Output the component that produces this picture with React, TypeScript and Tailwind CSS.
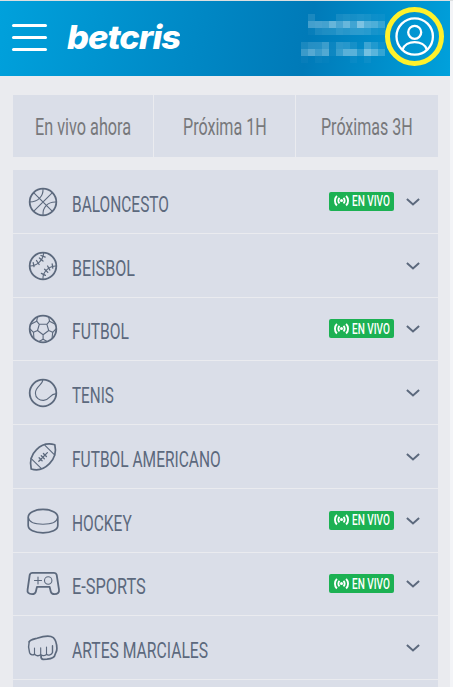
import { ReactNode, useLayoutEffect, useRef, useState } from 'react';

interface Sport {
  id: string;
  name: string;
  width: number;
  live: boolean;
  icon: ReactNode;
}

interface CondensedProps {
  text: string;
  width: number;
  className?: string;
}

// Squeezes a line of text horizontally so that it fills the given width
function Condensed({ text, width, className = '' }: CondensedProps) {
  const ref = useRef<HTMLSpanElement>(null);
  const [scale, setScale] = useState(0.66);

  useLayoutEffect(() => {
    if (ref.current) setScale(width / ref.current.offsetWidth);
  }, [text, width]);

  return (
    <span className={`block whitespace-nowrap ${className}`} style={{ width }}>
      <span
        ref={ref}
        className="inline-block origin-left"
        style={{ transform: `scaleX(${scale})` }}
      >
        {text}
      </span>
    </span>
  );
}

const basketball = (
  <>
    <circle cx="18" cy="18" r="13.3" strokeWidth="1.8" />
    <path d="M8.6 8.6 27.4 27.4M27.4 8.6 8.6 27.4M18 4.7C18.5 12 13 18 4.7 18M31.3 18C23 17.5 17.5 23 18 31.3" />
  </>
);

const baseball = (
  <>
    <circle cx="18" cy="18" r="13.3" strokeWidth="1.8" />
    <path d="M18.5 5C18.5 12 12 18 5 18M31 18C24 18 17.5 24 18 31" />
    <path d="M16 7.5l4.2 1.6M14.4 10l3.600 3M11.500 12.500l2.600 4M8.200 14.600l.8 4M27.200 16l.6 4.200M22.600 18l2.200 4M19.600 21.200l3.200 3.200M16.400 25.400l4 2" strokeWidth="1.300" />
  </>
);

const soccer = (
  <>
    <circle cx="18" cy="18" r="13.3" strokeWidth="1.8" />
    <path d="M14.3 13.3h7.6l1.8 6.2-5.6 4.3-5.6-4.3zM14.3 13.3l-2.6-3.1M21.9 13.3l2.6-3.1M23.7 19.5l4 1.8M12.5 19.5l-4 1.8M18.1 23.8v4.5" />
    <path d="M12.500 6l-.8 4.200-5.400 2.700M23.700 6l.8 4.200 5.400 2.700M5 18l3.500 3.300.4 5.800M31 18l-3.300 3.300-.6 5.800M14 30.500l4.100-2.200 4.100 2.200" />
  </>
);

const tennis = (
  <>
    <circle cx="18" cy="18" r="13.3" strokeWidth="1.8" />
    <path d="M17.8 4.8C18 10 10.4 11 10.4 18.2C10.4 23 14.5 25.6 18.6 25.4C25 25 25.3 18.2 31 18.9" />
  </>
);

const football = (
  <>
    <path
      d="M6.2 30C4.7 23.5 5.9 16 11.5 10.6C17 5.2 24 4.1 29.8 5.8C31.3 12 30 19 24.5 24.7C19 30.2 12 31.9 6.2 30Z"
      strokeWidth="1.7"
    />
    <path d="M20 6.3 29.8 16.2M6 19.4 16.2 29.4" />
    <path d="M13.8 22.2 22.4 13.6M14.1 18.8l3 3M16.3 16.7l3 3M18.4 14.5l3 3" strokeWidth="1.300" />
  </>
);

const puck = (
  <>
    <path
      d="M3.2 14.3C3.2 10 9.5 6.400 18 6.400s14.8 3.600 14.8 7.900v8.200c0 4.400-6.300 7.400-14.800 7.400S3.200 26.900 3.200 22.500z"
      strokeWidth="1.7"
    />
    <path d="M3.4 14.5C4 19 10 21.2 18 21.2s14-2.2 14.600-6.700" />
  </>
);

const gamepad = (
  <>
    <path
      d="M7.5 6.800h21.200c1.800 0 2.700.8 3 2.200l2.300 14.600c.5 3-1.500 4.500-4.500 4.500-2.200 0-3.200-.4-3.700-2.400l-1.200-4.900H12l-1.200 4.900c-.5 2-1.700 2.400-3.700 2.400-3.500 0-5.100-1.600-4.500-4.500L4.700 9C5 7.600 5.900 6.800 7.500 6.800Z"
      strokeWidth="1.8"
    />
    <circle cx="23.200" cy="14.500" r="3.700" />
    <path d="M13 11v7M9.500 14.500h7" />
  </>
);

const fist = (
  <>
    <path
      d="M4.200 11.800C5 9.500 9.500 8.900 12 8.200C17.500 6.500 25 5.200 28.300 7.600C30.500 9.500 31.800 15 31.900 18.500C32 21.500 30.600 22.600 30.200 24.200C29.700 27.700 25.500 29 22 29.200L18.200 29.300C16.400 29.200 15.900 27.700 16 25.700"
      strokeWidth="1.7"
    />
    <path
      d="M4.200 11.800C3.200 15.500 3.500 19.500 4.600 22.800C5.500 25.200 8.200 25.300 9.600 24.100C11 26.100 14 26.200 15.700 24.800C17.400 26.100 20.300 25.900 21.500 24.400C23.400 25.800 26.600 24.900 27.500 22.500V15.800"
      strokeWidth="1.400"
    />
    <path d="M9.500 18v6M15.700 17.700v7M21.500 17v7.500" />
  </>
);

const sports: Sport[] = [
  { id: 'basketball', name: 'BALONCESTO', width: 97, live: true, icon: basketball },
  { id: 'baseball', name: 'BEISBOL', width: 63, live: false, icon: baseball },
  { id: 'soccer', name: 'FUTBOL', width: 57, live: true, icon: soccer },
  { id: 'tennis', name: 'TENIS', width: 42, live: false, icon: tennis },
  { id: 'football', name: 'FUTBOL AMERICANO', width: 149, live: false, icon: football },
  { id: 'hockey', name: 'HOCKEY', width: 60, live: true, icon: puck },
  { id: 'esports', name: 'E-SPORTS', width: 74, live: true, icon: gamepad },
  { id: 'martial', name: 'ARTES MARCIALES', width: 136, live: false, icon: fist },
];

const tabs = [
  { name: 'En vivo ahora', width: 96 },
  { name: 'Próxima 1H', width: 84 },
  { name: 'Próximas 3H', width: 92 },
];

// Opacity of each cell in the masked user name and balance
const maskedName = [
  [0.12, 0, 0, 0, 0.1, 0.12, 0.1, 0.12, 0.1, 0.06, 0.05],
  [0.32, 0.34, 0.32, 0.48, 0.34, 0.48, 0.3, 0.58, 0.4, 0.36, 0.25],
  [0.04, 0.12, 0.14, 0.14, 0.2, 0.18, 0.2, 0.2, 0.18, 0.1, 0.08],
];
const maskedBalance = [
  [0.12, 0.18, 0.18, 0.28, 0.05, 0.2, 0.18, 0.1, 0.02, 0.28, 0.15, 0.06],
  [0.28, 0.4, 0.28, 0.38, 0.06, 0.26, 0.42, 0.42, 0.2, 0.54, 0.42, 0.24],
  [0.03, 0, 0.04, 0.02, 0, 0, 0, 0.04, 0, 0.05, 0, 0],
];

function Mosaic({ rows }: { rows: number[][] }) {
  return (
    <div>
      {rows.map((row, i) => (
        <div key={i} className="flex justify-end">
          {row.map((opacity, j) => (
            <span key={j} className="size-[7px] bg-[#d5eef8]" style={{ opacity }} />
          ))}
        </div>
      ))}
    </div>
  );
}

function Header() {
  return (
    <header className="flex h-[75px] w-[450px] bg-linear-100 from-[#00a1dc] via-[#007ab8] via-68% to-[#00a1dc]">
      <button className="mt-[23px] ml-3 flex h-[27px] w-[35px] flex-col justify-between" aria-label="Menu">
        <span className="h-[3px] w-full rounded-sm bg-white" />
        <span className="h-[3px] w-full rounded-sm bg-white" />
        <span className="h-[3px] w-full rounded-sm bg-white" />
      </button>
      <Condensed
        text="betcris"
        width={113}
        className="mt-4 ml-5 font-[Inter,sans-serif] text-[33px] leading-[40px] font-extrabold tracking-[-1px] text-white italic"
      />
      <div className="mt-[13px] ml-auto space-y-[7px]">
        <Mosaic rows={maskedName} />
        <Mosaic rows={maskedBalance} />
      </div>
      <button className="mt-1.5 mr-[6px] size-[59px]" aria-label="Cuenta">
        <svg viewBox="0 0 59 59" fill="none" stroke="white" strokeWidth="2.3">
          <circle cx="29.500" cy="29.500" r="27" stroke="#fff12b" strokeWidth="5" />
          <circle cx="29.700" cy="29.500" r="18.200" />
          <circle cx="29.700" cy="25.300" r="6.500" />
          <path d="M17.500 42.700c3-10.200 21.400-10.200 24.400 0" />
        </svg>
      </button>
    </header>
  );
}

function LiveBadge() {
  return (
    <span className="flex h-[19px] w-[65px] items-center rounded-[2px] bg-[#1cb153] pl-[5px] text-white">
      <svg className="h-3 w-[15px]" viewBox="0 0 15 12" fill="none" stroke="currentColor" strokeWidth="1.900">
        <path d="M2.900.8C.3 3.400.3 7.900 2.900 10.500M12.100.8c2.600 2.600 2.600 7.100 0 9.700M5.500 2.900c-1.500 1.500-1.500 4 0 5.500M9.500 2.900c1.500 1.500 1.500 4 0 5.500" />
        <circle cx="7.500" cy="5.600" r="1.500" fill="currentColor" stroke="none" />
      </svg>
      <Condensed text="EN VIVO" width={38} className="ml-[2.500px] pt-px text-[14.500px] leading-[19px] font-medium" />
    </span>
  );
}

export default function App() {
  return (
    <div className="h-[687px] w-[453px] overflow-hidden border-t border-[#dcdfe0] bg-[#f3f4f7] font-[Roboto,sans-serif]">
      <div className="h-full w-[450px] bg-[#eaebef]">
        <Header />

        <nav className="mx-[13px] mt-[19px] grid h-[62px] w-[425px] grid-cols-[141px_142px_142px] bg-[#dadee8]">
          {tabs.map((tab) => (
            <button
              key={tab.name}
              className="flex items-center justify-center border-r border-[#eaebef] pt-1 text-left text-[23px] text-[#77787b] last:border-r-0"
            >
              <Condensed text={tab.name} width={tab.width} />
            </button>
          ))}
        </nav>

        <ul className="mx-[13px] mt-[13px] w-[425px] bg-[#dadee8] pb-10 text-[#5c697d]">
          {sports.map((sport) => (
            <li key={sport.id} className="flex h-[63.75px] items-center border-b border-[#eaebef]">
              <svg
                className="ml-[11.500px] mt-px size-9 shrink-0"
                viewBox="0 0 36 36"
                fill="none"
                stroke="currentColor"
                strokeWidth="1.100"
                strokeLinecap="round"
                strokeLinejoin="round"
              >
                {sport.icon}
              </svg>
              <Condensed
                text={sport.name}
                width={sport.width}
                className="ml-[11.500px] pt-[5px] text-[22.500px] leading-[30px]"
              />
              <div className="mr-[18px] ml-auto flex items-center gap-3">
                {sport.live && <LiveBadge />}
                <svg className="mt-px h-2.5 w-3.5" viewBox="0 0 14 10" fill="none" stroke="currentColor" strokeWidth="2">
                  <path d="M.9 2 7 7.500 13.100 2" />
                </svg>
              </div>
            </li>
          ))}
        </ul>
      </div>
    </div>
  );
}
